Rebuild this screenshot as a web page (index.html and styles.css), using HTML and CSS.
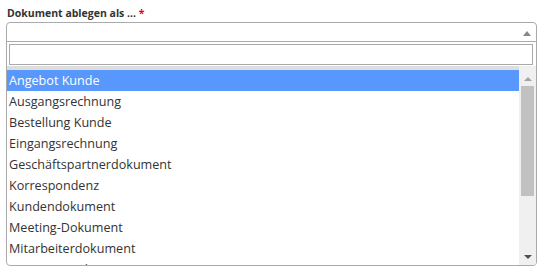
FILE: index.html
```html
<!DOCTYPE html>
<html>
<head>
<meta charset="utf-8">
<link rel="stylesheet" href="styles.css">
</head>
<body>
<div class="field">
  <div class="label">Dokument ablegen als ... <span class="req">*</span></div>
  <div class="select">
    <div class="head"><span class="arrow-up"></span></div>
    <div class="search"><input type="text" class="input"></div>
    <div class="dropdown">
      <ul class="options">
        <li class="opt active">Angebot Kunde</li>
        <li class="opt">Ausgangsrechnung</li>
        <li class="opt">Bestellung Kunde</li>
        <li class="opt">Eingangsrechnung</li>
        <li class="opt">Geschäftspartnerdokument</li>
        <li class="opt">Korrespondenz</li>
        <li class="opt">Kundendokument</li>
        <li class="opt">Meeting-Dokument</li>
        <li class="opt">Mitarbeiterdokument</li>
        <li class="opt">Sonstiges Dokument</li>
      </ul>
      <div class="scrollbar">
        <span class="sb-up"></span>
        <div class="sb-track"><div class="sb-thumb"></div></div>
        <span class="sb-down"></span>
      </div>
    </div>
  </div>
</div>
</body>
</html>
```
FILE: styles.css
```css
html, body { margin: 0; padding: 0; background: #fff; }
body { font-family: "Open Sans", "Noto Sans", sans-serif; color: #333; }
.field { padding: 7px 6px 0 6px; width: 531px; }
.label { font-size: 10.5px; font-weight: 700; color: #333; padding-left: 1px; height: 15px; line-height: 12px; }
.req { color: #e00; }
.select { border: 1px solid #aaa; border-radius: 4px; height: 242px; display: flex; flex-direction: column; overflow: hidden; }
.head { height: 18px; border-bottom: 1px solid #aaa; position: relative; }
.arrow-up { position: absolute; right: 5px; top: 8px; width: 0; height: 0; border-left: 4px solid transparent; border-right: 4px solid transparent; border-bottom: 5px solid #888; }
.search { padding: 2px 3px 1px 2px; }
.input { display: block; box-sizing: border-box; width: 100%; height: 21px; border: 1px solid #aaa; margin: 0; padding: 0 4px; outline: none; }
.dropdown { flex: 1; display: flex; min-height: 0; border-top: 4px solid #ddd; }
.options { flex: 1; list-style: none; margin: 0; padding: 0; overflow: hidden; }
.opt { font-size: 12.6px; height: 21px; line-height: 21px; padding-left: 2px; color: #333; white-space: nowrap; }
.opt.active { background: #5897fb; color: #fff; }
.scrollbar { width: 17px; background: #f0f0f0; display: flex; flex-direction: column; align-items: center; margin-top: -4px; }
.sb-up { margin-top: 11px; width: 0; height: 0; border-left: 4px solid transparent; border-right: 4px solid transparent; border-bottom: 4px solid #a3a3a3; }
.sb-track { flex: 1; width: 100%; padding: 5px 2px 0 2px; box-sizing: border-box; }
.sb-thumb { height: 110px; background: #c1c1c1; }
.sb-down { margin-bottom: 6px; width: 0; height: 0; border-left: 4px solid transparent; border-right: 4px solid transparent; border-top: 4px solid #505050; }
```
